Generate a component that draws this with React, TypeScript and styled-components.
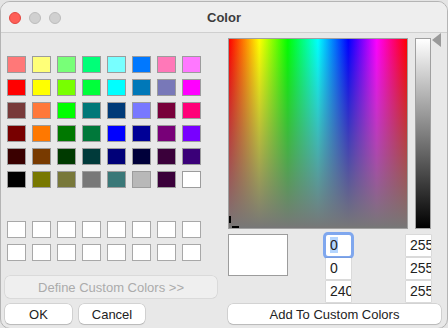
import styled, { createGlobalStyle } from "styled-components";

const GlobalStyle = createGlobalStyle`
  html, body {
    margin: 0;
    padding: 0;
    background: #e4e4e4;
  }
  body {
    font-family: "Liberation Sans", Arial, sans-serif;
    font-size: 13px;
    color: #222;
  }
`;

const basicColors = [
  ["#ff7878", "#ffff78", "#78ff78", "#00ff78", "#78ffff", "#0078ff", "#ff78b8", "#ff78ff"],
  ["#ff0000", "#ffff00", "#78ff00", "#00ff3a", "#00ffff", "#0078b8", "#7878b8", "#ff00ff"],
  ["#783a3a", "#ff783a", "#00ff00", "#007878", "#003a78", "#7878ff", "#78003a", "#ff0078"],
  ["#780000", "#ff7800", "#007800", "#00783a", "#0000ff", "#000096", "#780078", "#7800ff"],
  ["#3a0000", "#783a00", "#003a00", "#003a3a", "#000078", "#00003a", "#3a003a", "#3a0078"],
  ["#000000", "#787800", "#78783a", "#787878", "#3a7878", "#b8b8b8", "#3a003a", "#ffffff"],
];

const lights = ["#fe5f57", "#d0d0d0", "#d0d0d0"];

const App = () => {
  return (
    <>
      <GlobalStyle />
      <Window>
        <TitleBar>
          <Lights>
            {lights.map((c, i) => (
              <Light key={i} $color={c} $red={i === 0} />
            ))}
          </Lights>
          <Title>Color</Title>
        </TitleBar>
        <Body>
          <LeftPanel>
            <SwatchGrid>
              {basicColors.flat().map((c, i) => (
                <Swatch key={i} $color={c} />
              ))}
            </SwatchGrid>
            <CustomGrid>
              {Array.from({ length: 16 }).map((_, i) => (
                <Swatch key={i} $color="#ffffff" $light />
              ))}
            </CustomGrid>
            <DefineButton>Define Custom Colors &gt;&gt;</DefineButton>
            <ButtonRow>
              <Button $w={67}>OK</Button>
              <Button $w={66}>Cancel</Button>
            </ButtonRow>
          </LeftPanel>
          <RightPanel>
            <PickerRow>
              <Spectrum>
                <CrossV />
                <CrossH />
              </Spectrum>
              <LumBar />
              <Arrow />
            </PickerRow>
            <ControlsRow>
              <Preview />
              <FieldColumn $ml={38}>
                <Field $focused>
                  <Selected>0</Selected>
                </Field>
                <Field>0</Field>
                <Field>240</Field>
              </FieldColumn>
              <FieldColumn $ml={55}>
                <Field>255</Field>
                <Field>255</Field>
                <Field>255</Field>
              </FieldColumn>
            </ControlsRow>
            <AddButton>Add To Custom Colors</AddButton>
          </RightPanel>
        </Body>
      </Window>
    </>
  );
};
export default App;

const Window = styled.div`
  width: 446px;
  height: 326px;
  margin-top: 1px;
  border: 1px solid #b4b4b4;
  border-radius: 10px;
  background: #e8e8e8;
  overflow: hidden;
  display: flex;
  flex-direction: column;
`;

const TitleBar = styled.div`
  position: relative;
  height: 30px;
  flex-shrink: 0;
  background: #eeeeee;
  border-bottom: 1px solid #cfcfcf;
  display: flex;
  align-items: center;
  justify-content: center;
`;

const Lights = styled.div`
  position: absolute;
  left: 8px;
  top: 10px;
  display: flex;
  gap: 8px;
`;

const Light = styled.div<{ $color: string; $red?: boolean }>`
  width: 12px;
  height: 12px;
  border-radius: 50%;
  background: ${(p) => p.$color};
  box-sizing: border-box;
  border: 0.5px solid ${(p) => (p.$red ? "#e2463f" : "#bcbcbc")};
`;

const Title = styled.div`
  font-size: 13px;
  font-weight: 700;
  color: #3c3c3c;
`;

const Body = styled.div`
  display: flex;
  gap: 11px;
  padding-left: 4px;
`;

const LeftPanel = styled.div`
  width: 212px;
  display: flex;
  flex-direction: column;
  padding-top: 23px;
`;

const SwatchGrid = styled.div`
  display: grid;
  grid-template-columns: repeat(8, 19px);
  grid-auto-rows: 17px;
  gap: 6px;
  margin-left: 2px;
`;

const CustomGrid = styled(SwatchGrid)`
  margin-top: 33px;
`;

const Swatch = styled.div<{ $color: string; $light?: boolean }>`
  box-sizing: border-box;
  background: ${(p) => p.$color};
  border: 1px solid ${(p) => (p.$light ? "#a8a8a8" : "#9c9c9c")};
`;

const DefineButton = styled.div`
  margin-top: 15px;
  height: 22px;
  border-radius: 5px;
  background: #efefef;
  box-shadow: 0 0 0 0.5px rgba(0, 0, 0, 0.12);
  color: #ababab;
  font-size: 13px;
  display: flex;
  align-items: center;
  justify-content: center;
`;

const ButtonRow = styled.div`
  margin-top: 6px;
  display: flex;
  gap: 7px;
`;

const Button = styled.div<{ $w: number }>`
  width: ${(p) => p.$w}px;
  height: 20px;
  border-radius: 5px;
  background: #ffffff;
  box-shadow: 0 0 0 0.5px rgba(0, 0, 0, 0.18), 0 1px 1px rgba(0, 0, 0, 0.12);
  color: #222;
  font-size: 13px;
  display: flex;
  align-items: center;
  justify-content: center;
`;

const RightPanel = styled.div`
  width: 213px;
  display: flex;
  flex-direction: column;
  padding-top: 5px;
`;

const PickerRow = styled.div`
  display: flex;
  align-items: flex-start;
  height: 191px;
`;

const Spectrum = styled.div`
  position: relative;
  width: 178px;
  height: 189px;
  border: 1px solid #a0a0a0;
  background: linear-gradient(to bottom, rgba(122, 122, 122, 0) 0%, #777777 100%),
    linear-gradient(to right, #ff0000 0%, #ffff00 17%, #00ff00 33%, #00ffff 50%, #0000ff 67%, #ff00ff 83%, #ff0000 100%);
`;

const CrossV = styled.div`
  position: absolute;
  left: 0;
  top: 177px;
  width: 2px;
  height: 7px;
  background: #000;
`;

const CrossH = styled.div`
  position: absolute;
  left: 3px;
  top: 187px;
  width: 7px;
  height: 2px;
  background: #000;
`;

const LumBar = styled.div`
  margin-left: 7px;
  width: 14px;
  height: 189px;
  border: 1px solid #a0a0a0;
  background: linear-gradient(to bottom, #ffffff, #000000);
`;

const Arrow = styled.div`
  margin-left: 1px;
  margin-top: -5px;
  width: 0;
  height: 0;
  border-top: 7px solid transparent;
  border-bottom: 7px solid transparent;
  border-right: 9px solid #9a9a9a;
`;

const ControlsRow = styled.div`
  display: flex;
  align-items: flex-start;
  margin-top: 5px;
  height: 70px;
`;

const Preview = styled.div`
  width: 58px;
  height: 40px;
  background: #ffffff;
  border: 1px solid #9c9c9c;
`;

const FieldColumn = styled.div<{ $ml: number }>`
  margin-left: ${(p) => p.$ml}px;
  margin-top: 1px;
  display: flex;
  flex-direction: column;
  gap: 2px;
`;

const Field = styled.div<{ $focused?: boolean }>`
  width: 25px;
  height: 21px;
  box-sizing: border-box;
  background: #ffffff;
  overflow: hidden;
  white-space: nowrap;
  padding-left: 4px;
  font-size: 14px;
  line-height: 21px;
  color: #222;
  box-shadow: ${(p) =>
    p.$focused
      ? "0 0 0 3px rgba(92, 146, 240, 0.75)"
      : "0 0 0 0.5px rgba(0, 0, 0, 0.12)"};
  border-radius: ${(p) => (p.$focused ? "2px" : "0")};
`;

const Selected = styled.span`
  background: #b4d5fe;
`;

const AddButton = styled.div`
  height: 20px;
  border-radius: 5px;
  background: #ffffff;
  box-shadow: 0 0 0 0.5px rgba(0, 0, 0, 0.18), 0 1px 1px rgba(0, 0, 0, 0.12);
  color: #222;
  font-size: 13px;
  display: flex;
  align-items: center;
  justify-content: center;
`;
